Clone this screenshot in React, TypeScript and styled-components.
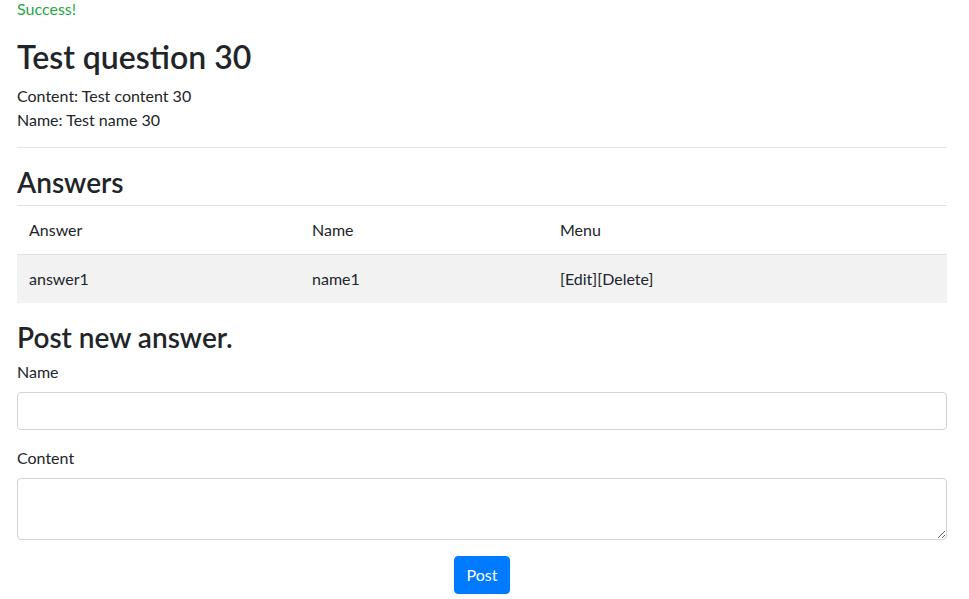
import React from 'react'
import styled, { createGlobalStyle } from 'styled-components'

type Answer = {
  id: number,
  answer: string,
  name: string,
}

const answers: Answer[] = [
  { id: 1, answer: 'answer1', name: 'name1' },
]

const GlobalStyle = createGlobalStyle`
  html, body {
    margin: 0;
    padding: 0;
    background: #fff;
  }
  body {
    font-family: Lato, "Segoe UI", "Liberation Sans", sans-serif;
    font-size: 16px;
    line-height: 1.5;
    color: #212529;
  }
  * {
    box-sizing: border-box;
  }
`

const Page = styled.div`
  padding: 0 22px 0 17px;
`

const Flash = styled.div`
  margin-top: -3px;
  color: #28a745;
`

const Title = styled.h1`
  margin: 17px 0 8px;
  font-size: 32px;
  font-weight: 600;
  line-height: 1.2;
`

const Info = styled.p`
  margin: 0;
`

const Divider = styled.hr`
  margin: 15px 0 18px;
  border: 0;
  border-top: 1px solid rgba(0, 0, 0, 0.1);
`

const SectionTitle = styled.h3<{ $gap: number }>`
  margin: 0 0 ${(p) => p.$gap}px;
  font-size: 28px;
  font-weight: 600;
  line-height: 1.2;
`

const Table = styled.table`
  width: 100%;
  margin-bottom: 18px;
  border-collapse: collapse;
  table-layout: fixed;
`

const Row = styled.tr<{ $striped?: boolean }>`
  background: ${(p) => (p.$striped ? '#f2f2f2' : 'transparent')};
`

const Cell = styled.td`
  padding: 12px;
  border-top: 1px solid #dee2e6;
  vertical-align: top;
  text-align: left;
  font-weight: 400;
`

const FormGroup = styled.div`
  margin-bottom: 16px;
`

const Label = styled.label`
  display: inline-block;
  margin-bottom: 8px;
`

const Input = styled.input`
  display: block;
  width: 100%;
  height: 38px;
  padding: 6px 12px;
  font: inherit;
  color: #495057;
  background: #fff;
  border: 1px solid #ced4da;
  border-radius: 4px;
`

const TextArea = styled.textarea`
  display: block;
  width: 100%;
  height: 62px;
  padding: 6px 12px;
  font: inherit;
  color: #495057;
  background: #fff;
  border: 1px solid #ced4da;
  border-radius: 4px;
`

const Actions = styled.div`
  display: flex;
  justify-content: center;
`

const Button = styled.button`
  height: 38px;
  padding: 6px 12px;
  font: inherit;
  color: #fff;
  background: #007bff;
  border: 1px solid #007bff;
  border-radius: 4px;
  cursor: pointer;
`

const App: React.FC = () => {
  return <Page>
    <GlobalStyle />
    <Flash>Success!</Flash>
    <Title>Test question 30</Title>
    <Info>Content: Test content 30</Info>
    <Info>Name: Test name 30</Info>
    <Divider />
    <SectionTitle $gap={5}>Answers</SectionTitle>
    <Table>
      <colgroup>
        <col style={{ width: '283px' }} />
        <col style={{ width: '248px' }} />
        <col />
      </colgroup>
      <thead>
        <Row>
          <Cell as="th">Answer</Cell>
          <Cell as="th">Name</Cell>
          <Cell as="th">Menu</Cell>
        </Row>
      </thead>
      <tbody>
        {answers.map((a, index) => <Row key={a.id} $striped={index % 2 === 0}>
          <Cell>{a.answer}</Cell>
          <Cell>{a.name}</Cell>
          <Cell>[Edit][Delete]</Cell>
        </Row>)}
      </tbody>
    </Table>
    <SectionTitle $gap={5}>Post new answer.</SectionTitle>
    <form onSubmit={(e) => e.preventDefault()}>
      <FormGroup>
        <Label htmlFor="name">Name</Label>
        <Input id="name" type="text" />
      </FormGroup>
      <FormGroup>
        <Label htmlFor="content">Content</Label>
        <TextArea id="content" />
      </FormGroup>
      <Actions>
        <Button type="submit">Post</Button>
      </Actions>
    </form>
  </Page>
}

export default App
